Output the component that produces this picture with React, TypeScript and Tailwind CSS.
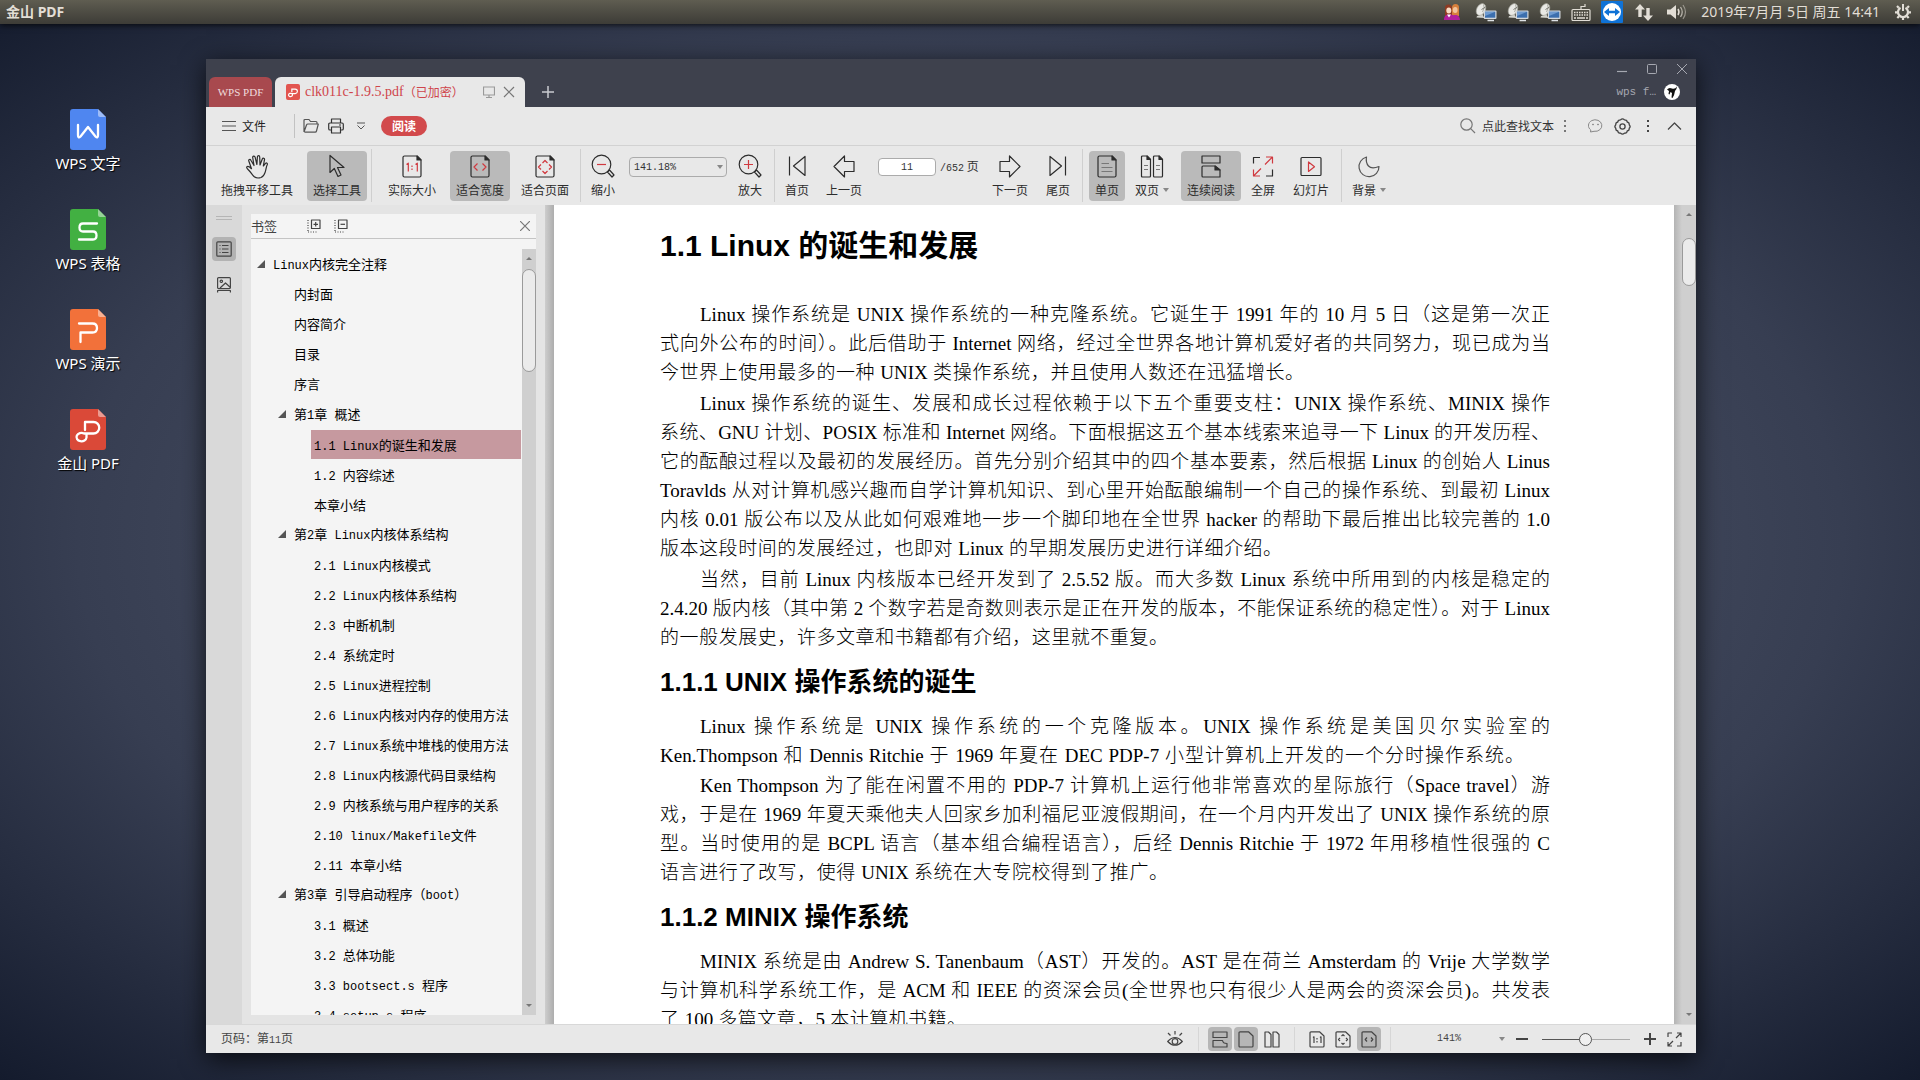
import * as React from "react";
import { clsx } from "clsx";

const uiFont = "font-['Noto_Sans_CJK_SC',sans-serif]";
const monoFont = "font-['Liberation_Mono','Noto_Sans_CJK_SC',monospace]";
const desktopFont = "font-['Noto_Sans','Noto_Sans_CJK_SC',sans-serif]";

interface IconProps {
  className?: string;
  viewBox?: string;
  strokeWidth?: number;
  children: React.ReactNode;
}

function Icon({
  className = "h-6 w-6",
  viewBox = "0 0 24 24",
  strokeWidth = 1.2,
  children,
}: IconProps) {
  return (
    <svg
      className={clsx("shrink-0", className)}
      viewBox={viewBox}
      fill="none"
      stroke="currentColor"
      strokeWidth={strokeWidth}
      strokeLinejoin="round"
      aria-hidden="true"
    >
      {children}
    </svg>
  );
}

const PAGE = "M4.5 1.5H17L21 5.5V21a1.5 1.5 0 0 1-1.5 1.5h-15A1.5 1.5 0 0 1 3 21V3a1.5 1.5 0 0 1 1.5-1.5z";
const FOLD = "M17 1.5L21 5.5H17z";
const RED = "#d0393f";

/* ---------- system bar ---------- */

function SatelliteIcon() {
  return (
    <svg className="h-[19px] w-[22px]" viewBox="0 0 22 19" aria-hidden="true">
      <path d="M1.500 14.500q0-2 3-2l1-2h2l.5 2.500 2 2z" fill="#d5d5cf" />
      <ellipse cx="6" cy="6.500" rx="4.300" ry="6.300" transform="rotate(28 6 6.500)" fill="#e9e9e5" stroke="#a3a39b" strokeWidth=".6" />
      <path d="M8.500 1.500q2 3-1 7.500" stroke="#9a9a92" strokeWidth=".8" fill="none" />
      <path d="M6.500 6.500L10.500 4" stroke="#75756e" strokeWidth="1" />
      <rect x="8.800" y="7.500" width="12.700" height="8.500" rx="1" fill="#d3d8dc" />
      <rect x="10" y="8.700" width="10.300" height="6" fill="#3c6fae" />
      <path d="M10 8.700h10.300L10 13z" fill="#6f9bd0" />
      <path d="M12.500 17.500h6.500" stroke="#dfe3e6" strokeWidth="1.500" />
    </svg>
  );
}

function SystemBar() {
  return (
    <header
      className={clsx(
        "z-10 flex h-6 shrink-0 items-center bg-linear-to-b from-[#5f5d51] to-[#3d3c37] pr-2 pl-[6px] text-sm text-[#e2ded6] shadow-[0_1px_6px_rgba(0,0,0,0.8)]",
        desktopFont,
      )}
    >
      <span className="font-bold">金山 PDF</span>
      <div className="ml-auto flex items-center gap-[10px]">
        <svg className="mr-[5px] h-4 w-4" viewBox="0 0 16 16" aria-hidden="true">
          <path d="M1 13V4q0-3.500 3.500-3.500T8 4v9z" fill="#8e3a22" />
          <path d="M8 12V3.500Q8 0 11.500 0T15 3.500V12z" fill="#d7803c" />
          <ellipse cx="4.800" cy="6.500" rx="2.500" ry="3" fill="#f9dcc4" />
          <ellipse cx="11.200" cy="6" rx="2.400" ry="3" fill="#f3c39c" />
          <path d="M0 16c0-4 2-5.500 5-5.500s4 1 6 .5 5 1 5 5z" fill="#b11f9c" />
          <path d="M3 10.500l2 3 2-3z" fill="#fff" />
        </svg>
        <SatelliteIcon />
        <SatelliteIcon />
        <SatelliteIcon />
        <svg className="h-5 w-5" viewBox="0 0 20 20" fill="none" stroke="#e2ded6" aria-hidden="true">
          <rect x="1" y="7.500" width="18" height="11" rx="1" strokeWidth="1.200" />
          <path d="M10 7V4.500h4V2" strokeWidth="1.200" />
          <path d="M3 10.500h14M3 13h14" strokeWidth="1.500" strokeDasharray="1.500 1" />
          <path d="M3 16h2M6 16h8M15 16h2" strokeWidth="1.500" />
        </svg>
        <svg className="h-[22px] w-[22px]" viewBox="0 0 22 22" aria-hidden="true">
          <rect width="22" height="22" rx="1" fill="#0f72d6" />
          <circle cx="11" cy="11" r="9" fill="#fff" />
          <path d="M3 11l5-4v2.700h6V7l5 4-5 4v-2.700H8V15z" fill="#0f72d6" />
        </svg>
        <svg className="ml-[2px] h-[17px] w-[18px]" viewBox="0 0 18 17" fill="#e2ded6" aria-hidden="true">
          <path d="M5 0l5 5.500H6.700V13H3.300V5.500H0z" />
          <path d="M13 17l5-5.500h-3.300V4h-3.400v7.500H8z" />
        </svg>
        <svg className="ml-1 h-4 w-5" viewBox="0 0 20 16" fill="none" stroke="#e2ded6" aria-hidden="true">
          <path d="M0 5.500h3.500L9 1v14l-5.500-4.500H0z" fill="#e2ded6" stroke="none" />
          <path d="M11 5c1.300 2 1.300 4 0 6" strokeWidth="1.500" />
          <path d="M13.500 3c2.300 3.300 2.300 6.700 0 10" strokeWidth="1.300" opacity=".7" />
          <path d="M16 1c3.300 4.700 3.300 9.300 0 14" strokeWidth="1.200" opacity=".5" />
        </svg>
        <time className="ml-1">2019年7月月 5日 周五 14:41</time>
        <svg className="ml-1 h-[18px] w-[18px]" viewBox="0 0 18 18" fill="none" stroke="#e2ded6" aria-hidden="true">
          <path d="M6.500 4.700a5 5 0 1 0 5 0" strokeWidth="2.200" />
          <path d="M9 1v7" strokeWidth="2" />
          <path d="M4.700 4.700L3 3M13.300 4.700L15 3M3.500 9.300H1M17 9.300h-2.500M5 13.300L3.300 15M13 13.300l1.700 1.700M9 14.500V17" strokeWidth="2.200" />
        </svg>
      </div>
    </header>
  );
}

/* ---------- desktop ---------- */

const PDF_GLYPH = "M15 21V13h8.500a5.500 5.500 0 0 1 0 11.500H14a5 4.200 0 1 0 2.500 4V25";

const shortcuts = [
  { label: "WPS 文字", color: "#4f86f0", glyph: "M8 16v10q0 4 2.500 1.500L18 18l7.500 9.500Q28 30 28 26V16" },
  { label: "WPS 表格", color: "#42b042", glyph: "M27 14.500H13q-3.500 0-3.500 4t3.500 4h10q3.500 0 3.500 4t-3.500 4H9" },
  { label: "WPS 演示", color: "#f2713a", glyph: "M9 14.500h13.500q4.500 0 4.500 4.500t-4.500 4.500H10.500V33" },
  { label: "金山 PDF", color: "#da4938", glyph: PDF_GLYPH },
];

function DesktopIcons() {
  return (
    <nav className={clsx("w-[206px] shrink-0 pt-[85px] pr-[30px]", desktopFont)}>
      <ul className="flex flex-col items-center gap-[34px]">
        {shortcuts.map((s) => (
          <li key={s.label}>
            <button className="flex flex-col items-center gap-px text-[15px] leading-6 text-white [text-shadow:1px_1px_1px_#000]">
              <svg className="h-[41px] w-9" viewBox="0 0 36 41" fill="none" aria-hidden="true">
                <path d="M3 0h25l8 8v30a3 3 0 0 1-3 3H3a3 3 0 0 1-3-3V3a3 3 0 0 1 3-3z" fill={s.color} />
                <path d="M28 0l8 8h-6a2 2 0 0 1-2-2z" fill="#fff" opacity=".45" />
                <path d={s.glyph} stroke="#fff" strokeWidth="2.300" strokeLinecap="round" strokeLinejoin="round" />
              </svg>
              {s.label}
            </button>
          </li>
        ))}
      </ul>
    </nav>
  );
}

/* ---------- window chrome ---------- */

function TitleBar() {
  return (
    <div className="flex h-12 shrink-0 items-end bg-[#3e414d] pl-[3px]">
      <button className="h-[30px] w-[63px] rounded-t-md bg-[#a8494e] font-['Liberation_Serif',serif] text-[11px] text-[#f0dcdc]">
        WPS PDF
      </button>
      <div className="ml-[3px] flex h-[30px] w-[250px] items-center rounded-t-md bg-[#e8e8e8] pr-[10px] pl-[11px] whitespace-nowrap text-[#cf454b]">
        <svg className="mr-[5px] h-4 w-[14px] shrink-0" viewBox="0 0 36 41" fill="none" aria-hidden="true">
          <rect width="36" height="41" rx="5" fill="#e2544f" />
          <path d={PDF_GLYPH} stroke="#fff" strokeWidth="3" />
        </svg>
        <span className="font-['Liberation_Serif',serif] text-sm">clk011c-1.9.5.pdf</span>
        <span className="text-xs">（已加密）</span>
        <Icon className="ml-auto h-3 w-3 text-[#999]" viewBox="0 0 12 12">
          <path d="M.5 1h11v8H.5zM6 9v2.500M3 11.500h6" />
        </Icon>
        <button aria-label="关闭标签" className="ml-2">
          <Icon className="h-3 w-3 text-[#777]" viewBox="0 0 12 12">
            <path d="M1 1l10 10M11 1L1 11" />
          </Icon>
        </button>
      </div>
      <button aria-label="新建标签" className="mb-[9px] ml-[17px] text-[#c9cad0]">
        <Icon className="h-3 w-3" viewBox="0 0 12 12" strokeWidth={1.5}>
          <path d="M6 0v12M0 6h12" />
        </Icon>
      </button>
      <div className="ml-auto flex flex-col items-end gap-[10px] pb-[7px] text-[#a6a8b1]">
        <div className="flex gap-5 pr-[9px]">
          <button aria-label="最小化">
            <Icon className="h-[10px] w-[10px]" viewBox="0 0 10 10">
              <path d="M0 7.500h10" />
            </Icon>
          </button>
          <button aria-label="最大化">
            <Icon className="h-[10px] w-[10px]" viewBox="0 0 10 10" strokeWidth={1}>
              <rect x=".5" y=".5" width="9" height="9" rx="1" />
            </Icon>
          </button>
          <button aria-label="关闭">
            <Icon className="h-[10px] w-[10px]" viewBox="0 0 10 10" strokeWidth={1}>
              <path d="M0 0l10 10M10 0L0 10" />
            </Icon>
          </button>
        </div>
        <div className="flex items-center gap-2 pr-4">
          <span className={clsx("text-[11px] leading-4", monoFont)}>wps f…</span>
          <svg className="h-4 w-4" viewBox="0 0 16 16" aria-hidden="true">
            <circle cx="8" cy="8" r="8" fill="#fff" />
            <path d="M3 5.500Q5 3 8 4.500q3 1 5-2-.2 3-2 4.500-.5 4-2.500 7l-1-.5.5-4.500-1.500-1-1 2.500-1-.5L5 7z" fill="#111" />
          </svg>
        </div>
      </div>
    </div>
  );
}

function MenuBar() {
  return (
    <div className="flex h-[38px] shrink-0 items-center pr-[14px] pl-4 text-xs text-[#222]">
      <button className="flex items-center gap-[6px]">
        <Icon className="h-3 w-[14px] text-[#555]" viewBox="0 0 14 12">
          <path d="M0 1.500h14M0 6h14M0 10.500h14" />
        </Icon>
        文件
      </button>
      <span className="ml-7 h-6 w-px bg-[#c2c2c2]" />
      <button aria-label="打开" className="ml-2 text-[#555]">
        <Icon className="h-4 w-4" viewBox="0 0 16 16">
          <path d="M1 14V2.500Q1 1.500 2 1.500h4l1.500 2H13q1 0 1 1V6M1 14l2.500-7q.4-1 1.300-1H15.300L13.500 13q-.3 1.200-1.300 1.200H1.500" />
        </Icon>
      </button>
      <button aria-label="打印" className="ml-[9px] text-[#333]">
        <Icon className="h-4 w-4" viewBox="0 0 16 16">
          <path d="M3.500 5V1h9v4M3.500 12H2q-1.300 0-1.300-1.300V6.300Q.7 5 2 5h12q1.300 0 1.300 1.300v4.400Q15.300 12 14 12h-1.500M3.500 9h9v6h-9zM11 7h2" />
        </Icon>
      </button>
      <button aria-label="更多" className="ml-[13px] text-[#555]">
        <Icon className="h-2 w-2" viewBox="0 0 8 8" strokeWidth={1}>
          <path d="M0 1h8M.5 3.500L4 7l3.500-3.500" />
        </Icon>
      </button>
      <button className="ml-4 h-5 w-[46px] rounded-full bg-[#d24a4c] font-bold text-white">阅读</button>

      <label className="ml-auto flex items-center gap-[6px]">
        <Icon className="h-4 w-4 text-[#777]" viewBox="0 0 16 16">
          <circle cx="6.500" cy="6.500" r="5.700" />
          <path d="M10.700 10.700L15 15" />
        </Icon>
        <input
          type="text"
          placeholder="点此查找文本"
          className="w-[74px] bg-transparent text-xs outline-none placeholder:text-[#333]"
        />
      </label>
      <Icon className="ml-1 h-4 w-[10px] text-[#777]" viewBox="0 0 10 16" strokeWidth={2}>
        <path d="M5 2v2M5 7v2M5 12v2" />
      </Icon>
      <button aria-label="反馈" className="ml-[18px] text-[#888]">
        <Icon className="h-4 w-[15px]" viewBox="0 0 15 16" strokeWidth={1}>
          <path d="M2.800 12A6.700 5.800 0 1 1 6 13.300L2.500 14z" />
          <circle cx="5" cy="6.500" r=".5" fill="currentColor" />
          <circle cx="10" cy="6.500" r=".5" fill="currentColor" />
        </Icon>
      </button>
      <button aria-label="设置" className="ml-[11px] text-[#444]">
        <Icon className="h-[17px] w-[17px]" viewBox="0 0 17 17" strokeWidth={1.3}>
          <path d="M6.600 1.800Q8.500 0 10.400 1.800 13 1.600 13.200 4 15.600 4.600 15.200 6.700 17 8.500 15.200 10.300 15.600 12.400 13.200 13 13 15.400 10.400 15.200 8.500 17 6.600 15.200 4 15.400 3.800 13 1.400 12.400 1.800 10.300 0 8.500 1.800 6.700 1.400 4.600 3.800 4 4 1.600 6.600 1.800z" />
          <circle cx="8.500" cy="8.500" r="2.600" />
        </Icon>
      </button>
      <Icon className="ml-3 h-4 w-[10px] text-[#444]" viewBox="0 0 10 16" strokeWidth={2}>
        <path d="M5 2v2M5 7v2M5 12v2" />
      </Icon>
      <button aria-label="收起" className="ml-[14px] text-[#444]">
        <Icon className="h-[14px] w-[15px]" viewBox="0 0 15 14">
          <path d="M1 10.500L7.500 4l6.500 6.500" />
        </Icon>
      </button>
    </div>
  );
}

/* ---------- toolbar ---------- */

interface ToolButtonProps {
  label: string;
  className: string;
  active?: boolean;
  menu?: boolean;
  children: React.ReactNode;
}

function ToolButton({ label, className, active, menu, children }: ToolButtonProps) {
  return (
    <button
      aria-pressed={active}
      className={clsx(
        "flex h-[50px] shrink-0 flex-col items-center rounded pt-[3px] text-[#2c2c2c]",
        active && "bg-[#bababa]",
        className,
      )}
    >
      {children}
      <span className="mt-px flex items-center gap-1 text-xs leading-5 whitespace-nowrap">
        {label}
        {menu && <Caret />}
      </span>
    </button>
  );
}

function Caret() {
  return (
    <svg className="h-1 w-[6px] shrink-0" viewBox="0 0 6 4" fill="#888" aria-hidden="true">
      <path d="M0 0h6L3 4z" />
    </svg>
  );
}

function Divider({ className }: { className: string }) {
  return <span className={clsx("h-[53px] w-px shrink-0 bg-[#cfcfcf]", className)} />;
}

function ZoomIcon({ plus }: { plus?: boolean }) {
  return (
    <Icon className="h-[25px] w-6" viewBox="0 0 24 25">
      <circle cx="10.500" cy="10.500" r="9.300" />
      <path d="M16.500 18l2-2 4.500 5-2 2z" />
      <path d={plus ? "M6 10.500h9M10.500 6v9" : "M6 10.500h9"} stroke={RED} />
    </Icon>
  );
}

function Toolbar() {
  return (
    <div className="flex h-[60px] shrink-0 items-center border-t border-[#d2d2d2] pl-[9px]">
      <ToolButton label="拖拽平移工具" className="w-[84px]">
        <Icon className="h-[25px] w-6" viewBox="0 0 24 25">
          <path d="M9 22.500c-2-2-3-4-5.500-6.500-1.500-1.500-2.300-2.600-1.500-3.300 1.200-1 2.700.3 4.500 2L3.800 7C3.300 5.500 5.200 4.800 5.900 6.200L9 11.500 7.700 3.500c-.2-1.700 2-2 2.400-.4l1.800 7.400.5-7.700c.2-1.500 2.300-1.500 2.300.1l.3 8.100 2.300-6c.6-1.500 2.500-.8 2.200.7L18.300 12l2.200-2.600c1-1 2.300 0 1.700 1.300-1 2-1.200 4.800-2 7.500-.7 2.300-2 4.500-4.200 5.300-2.600.8-5.200.6-7-1z" />
        </Icon>
      </ToolButton>
      <ToolButton label="选择工具" active className="ml-2 w-[60px]">
        <Icon className="h-[25px] w-6" viewBox="0 0 24 25">
          <path d="M5 1.500v17l4.300-4 3.700 8 3-1.500-3.500-7.500H19z" />
        </Icon>
      </ToolButton>
      <Divider className="ml-1" />
      <ToolButton label="实际大小" className="ml-[10px] w-[60px]">
        <Icon className="h-[25px] w-6">
          <path d={PAGE} />
          <path d={FOLD} fill="currentColor" />
          <path d="M6.500 10L8.300 8.700V17M15.500 10l1.800-1.300V17M12 11v1.500M12 14v1.500" stroke={RED} />
        </Icon>
      </ToolButton>
      <ToolButton label="适合宽度" active className="ml-2 w-[60px]">
        <Icon className="h-[25px] w-6">
          <path d={PAGE} />
          <path d={FOLD} fill="currentColor" />
          <path d="M9.500 9L6 12.500 9.500 16M14.500 9l3.500 3.500-3.500 3.500" stroke={RED} />
        </Icon>
      </ToolButton>
      <ToolButton label="适合页面" className="ml-2 w-[54px]">
        <Icon className="h-[25px] w-6">
          <path d={PAGE} />
          <path d={FOLD} fill="currentColor" />
          <path d="M9.500 8.500L12 6l2.500 2.500M9.500 16.500L12 19l2.500-2.500M8 10l-2.500 2.500L8 15M16 10l2.500 2.500L16 15" stroke={RED} />
        </Icon>
      </ToolButton>
      <Divider className="ml-2" />
      <ToolButton label="缩小" className="ml-1 w-9">
        <ZoomIcon />
      </ToolButton>
      <div className="relative mb-[17px] ml-2 w-[98px] shrink-0">
        <select
          aria-label="缩放比例"
          className={clsx(
            "block h-5 w-full appearance-none rounded-sm border border-[#ababab] bg-[#e8e8e8] pl-1 text-[10px] text-[#333]",
            monoFont,
          )}
        >
          <option>141.18%</option>
        </select>
        <span className="pointer-events-none absolute top-2 right-1 flex">
          <Caret />
        </span>
      </div>
      <ToolButton label="放大" className="ml-[5px] w-9">
        <ZoomIcon plus />
      </ToolButton>
      <Divider className="ml-[6px]" />
      <ToolButton label="首页" className="ml-1 w-9">
        <Icon className="h-[25px] w-6">
          <path d="M4.500 2v19M20 2v19L8.500 11.500z" />
        </Icon>
      </ToolButton>
      <ToolButton label="上一页" className="ml-[7px] w-11">
        <Icon className="h-[25px] w-6">
          <path d="M2 12L12.500 1.500V7H22v10h-9.500v5.500z" />
        </Icon>
      </ToolButton>
      <input
        aria-label="页码"
        defaultValue="11"
        className={clsx(
          "mb-[17px] ml-3 h-[18px] w-[58px] shrink-0 rounded border border-[#ababab] bg-white text-center text-[10px] text-[#333]",
          monoFont,
        )}
      />
      <span className="mb-[17px] ml-1 w-10 shrink-0 text-xs whitespace-nowrap text-[#333]">
        <span className={clsx("text-[10px]", monoFont)}>/652</span> 页
      </span>
      <ToolButton label="下一页" className="ml-2 w-11">
        <Icon className="h-[25px] w-6">
          <path d="M22 12L11.500 1.500V7H2v10h9.500v5.500z" />
        </Icon>
      </ToolButton>
      <ToolButton label="尾页" className="ml-2 w-9">
        <Icon className="h-[25px] w-6">
          <path d="M19.500 2v19M4 2v19l11.500-9.500z" />
        </Icon>
      </ToolButton>
      <Divider className="ml-[6px]" />
      <ToolButton label="单页" active className="ml-[6px] w-9">
        <Icon className="h-[25px] w-6">
          <path d={PAGE} />
          <path d={FOLD} fill="currentColor" />
          <path d="M6.500 9H14M6.500 13h11M6.500 17h11" stroke="#777" />
        </Icon>
      </ToolButton>
      <ToolButton label="双页" menu className="ml-[5px] w-11">
        <Icon className="h-[25px] w-6">
          <path d="M2.500 1.500H7L10.500 5v16.500q0 1-1 1h-7q-1 0-1-1v-19q0-1 1-1zM14.500 1.500H19L22.500 5v16.500q0 1-1 1h-7q-1 0-1-1v-19q0-1 1-1z" />
          <path d="M7 1.500L10.500 5H7zM19 1.500L22.500 5H19z" fill="currentColor" />
          <path d="M4 11h4M4 15h4M16 11h4M16 15h4" stroke="#777" />
        </Icon>
      </ToolButton>
      <ToolButton label="连续阅读" active className="ml-[7px] w-[60px]">
        <Icon className="h-[25px] w-6">
          <path d="M3 1.500h18v7H3zM4 11.500h12l5 4V22.500H4q-1 0-1-1v-9q0-1 1-1z" />
          <path d="M16 11.500l5 4h-5z" fill="currentColor" />
        </Icon>
      </ToolButton>
      <ToolButton label="全屏" className="ml-1 w-9">
        <Icon className="h-[25px] w-6">
          <path d="M2.500 9V3H9M15 21.500h6.500V15" />
          <path d="M14 10l7-7M15 2.500h6.500V9M10 14l-7 7M2.500 15v6.500H9" stroke={RED} />
        </Icon>
      </ToolButton>
      <ToolButton label="幻灯片" className="ml-2 w-11">
        <Icon className="h-[25px] w-6">
          <rect x="2" y="3" width="20" height="18" rx="1" />
          <path d="M9.500 7.500v9.500l6-4.700z" stroke={RED} />
        </Icon>
      </ToolButton>
      <Divider className="ml-2" />
      <ToolButton label="背景" menu className="ml-[5px] w-11">
        <Icon className="h-[25px] w-6">
          <path d="M9.500 2.500Q8.500 8 11.500 11.500t10.500.5A10 10 0 1 1 9.500 2.500z" stroke="#555" />
        </Icon>
      </ToolButton>
    </div>
  );
}

/* ---------- bookmarks ---------- */

interface Bookmark {
  level: 0 | 1 | 2;
  text: string;
  open?: boolean;
  selected?: boolean;
}

const bookmarks: Bookmark[] = [
  { level: 0, text: "Linux内核完全注释", open: true },
  { level: 1, text: "内封面" },
  { level: 1, text: "内容简介" },
  { level: 1, text: "目录" },
  { level: 1, text: "序言" },
  { level: 1, text: "第1章 概述", open: true },
  { level: 2, text: "1.1 Linux的诞生和发展", selected: true },
  { level: 2, text: "1.2 内容综述" },
  { level: 2, text: "本章小结" },
  { level: 1, text: "第2章 Linux内核体系结构", open: true },
  { level: 2, text: "2.1 Linux内核模式" },
  { level: 2, text: "2.2 Linux内核体系结构" },
  { level: 2, text: "2.3 中断机制" },
  { level: 2, text: "2.4 系统定时" },
  { level: 2, text: "2.5 Linux进程控制" },
  { level: 2, text: "2.6 Linux内核对内存的使用方法" },
  { level: 2, text: "2.7 Linux系统中堆栈的使用方法" },
  { level: 2, text: "2.8 Linux内核源代码目录结构" },
  { level: 2, text: "2.9 内核系统与用户程序的关系" },
  { level: 2, text: "2.10 linux/Makefile文件" },
  { level: 2, text: "2.11 本章小结" },
  { level: 1, text: "第3章 引导启动程序（boot）", open: true },
  { level: 2, text: "3.1 概述" },
  { level: 2, text: "3.2 总体功能" },
  { level: 2, text: "3.3 bootsect.s 程序" },
  { level: 2, text: "3.4 setup.s 程序" },
];

const levelIndent = { 0: "pl-[6px]", 1: "pl-[27px]", 2: "pl-[60px]" };

// latin runs are set in a slightly smaller monospace face
function MixedText({ text }: { text: string }) {
  return (
    <>
      {text.split(/([\x20-\x7e]+)/).map((part, i) =>
        i % 2 === 1 ? (
          <span key={i} className={clsx("text-xs whitespace-pre", monoFont)}>
            {part}
          </span>
        ) : (
          part
        ),
      )}
    </>
  );
}

function Scrollbar({ thumb }: { thumb: string }) {
  return (
    <div className="flex w-[14px] shrink-0 flex-col items-center bg-[#cfcfcf] text-[#777]">
      <svg className="mt-2 h-[3px] w-[6px]" viewBox="0 0 6 3" fill="currentColor" aria-hidden="true">
        <path d="M0 3h6L3 0z" />
      </svg>
      <div className={clsx("w-full rounded-full border border-[#9a9a9a] bg-[#ebebeb]", thumb)} />
      <svg className="mt-auto mb-2 h-[3px] w-[6px]" viewBox="0 0 6 3" fill="currentColor" aria-hidden="true">
        <path d="M0 0h6L3 3z" />
      </svg>
    </div>
  );
}

function SideStrip() {
  return (
    <div className="flex w-9 shrink-0 flex-col items-center bg-[#d9d9d9] pt-[11px] text-[#444]">
      <span className="h-1 w-4 border-y border-[#b5b5b5]" />
      <button
        aria-label="书签"
        className="mt-[17px] flex h-6 w-6 items-center justify-center rounded bg-[#b3b3b3]"
      >
        <Icon className="h-4 w-4" viewBox="0 0 16 16">
          <rect x=".8" y=".8" width="14.400" height="14.400" rx="1" />
          <path d="M3.500 4.500h1M6 4.500h6.500M3.500 8h1M6 8h6.500M3.500 11.500h1M6 11.500h6.500" />
        </Icon>
      </button>
      <button aria-label="缩略图" className="mt-4">
        <Icon className="h-4 w-[14px]" viewBox="0 0 14 16">
          <rect x=".6" y=".6" width="12.800" height="11" rx="1" />
          <circle cx="4.300" cy="4.300" r="1.200" />
          <path d="M3 11l5.500-5 5 4.500M.6 15.500v-2h12.800v2" />
        </Icon>
      </button>
    </div>
  );
}

function BookmarkPanel() {
  return (
    <aside className="flex w-[303px] shrink-0 bg-[#e4e4e4] p-[9px]">
      <div className="flex min-h-0 w-full flex-col bg-[#f4f4f4]">
        <div className="flex h-[25px] shrink-0 items-center border-b border-[#c4c4c4] pr-[6px] text-[13px] text-[#444]">
          <h2>书签</h2>
          <button aria-label="全部展开" className="ml-[30px]">
            <Icon className="h-[14px] w-[14px]" viewBox="0 0 14 14">
              <rect x="4.500" y="1" width="8.500" height="8.500" />
              <path d="M6.500 5.300h4.500M8.700 3v4.500" />
              <path d="M1 1v12M1 13h10" strokeDasharray="1 1.500" />
            </Icon>
          </button>
          <button aria-label="全部收起" className="ml-[13px]">
            <Icon className="h-[14px] w-[14px]" viewBox="0 0 14 14">
              <rect x="4.500" y="1" width="8.500" height="8.500" />
              <path d="M6.500 5.300h4.500" />
              <path d="M1 1v12M1 13h10" strokeDasharray="1 1.500" />
            </Icon>
          </button>
          <button aria-label="关闭书签" className="ml-auto">
            <Icon className="h-[10px] w-[10px] text-[#777]" viewBox="0 0 10 10">
              <path d="M0 0l10 10M10 0L0 10" />
            </Icon>
          </button>
        </div>
        <div className="mt-[10px] flex min-h-0 flex-1">
          <ul className="min-w-0 flex-1 overflow-hidden text-[13px] text-black">
            {bookmarks.map((b) => (
              <li key={b.text} className={clsx("flex h-[30px] items-center pr-px", levelIndent[b.level])}>
                {b.level < 2 && (
                  <svg className="mr-2 h-2 w-2 shrink-0" viewBox="0 0 8 8" fill="#555" aria-hidden="true">
                    {b.open && <path d="M8 0v8H0z" />}
                  </svg>
                )}
                <a
                  href="#"
                  className={clsx(
                    "whitespace-nowrap",
                    b.level === 2 && "h-[29px] flex-1 pl-[3px] leading-[29px]",
                    b.selected && "bg-[#c6999f]",
                  )}
                >
                  <MixedText text={b.text} />
                </a>
              </li>
            ))}
          </ul>
          <Scrollbar thumb="mt-[9px] h-[103px]" />
        </div>
      </div>
    </aside>
  );
}

/* ---------- document ---------- */

interface ParagraphProps {
  lines: string[];
  // width taken by the closing line when it does not fill the column
  last: string;
}

function Paragraph({ lines, last }: ParagraphProps) {
  return (
    <p className="text-[19px] leading-[29px]">
      {lines.map((line, i) => (
        <span
          key={line}
          className={clsx(
            "block whitespace-nowrap [text-align-last:justify]",
            i === 0 && "pl-10",
            i === lines.length - 1 && last,
          )}
        >
          {line}
        </span>
      ))}
    </p>
  );
}

const subheading =
  "my-[14px] font-['Liberation_Sans','Noto_Sans_CJK_SC',sans-serif] text-[26px] leading-8 font-bold text-black";

function DocumentView() {
  return (
    <main className="flex min-w-0 flex-1">
      <div className="w-[9px] shrink-0 bg-linear-to-r from-[#cdcdcd] to-[#adadad]" />
      <article className="min-w-0 flex-1 overflow-hidden bg-white pt-[21px] pr-[124px] pl-[106px] font-['Liberation_Serif','Noto_Sans_CJK_SC',serif] font-light text-black">
        <h1 className="mb-[34px] font-['Liberation_Sans','Noto_Sans_CJK_SC',sans-serif] text-[30px] leading-10 font-bold text-black">
          1.1 Linux 的诞生和发展
        </h1>
        <div className="flex flex-col gap-[2px]">
          <Paragraph
            last="w-[644px]"
            lines={[
              "Linux 操作系统是 UNIX 操作系统的一种克隆系统。它诞生于 1991 年的 10 月 5 日（这是第一次正",
              "式向外公布的时间）。此后借助于 Internet 网络，经过全世界各地计算机爱好者的共同努力，现已成为当",
              "今世界上使用最多的一种 UNIX 类操作系统，并且使用人数还在迅猛增长。",
            ]}
          />
          <Paragraph
            last="w-[622px]"
            lines={[
              "Linux 操作系统的诞生、发展和成长过程依赖于以下五个重要支柱：UNIX 操作系统、MINIX 操作",
              "系统、GNU 计划、POSIX 标准和 Internet 网络。下面根据这五个基本线索来追寻一下 Linux 的开发历程、",
              "它的酝酿过程以及最初的发展经历。首先分别介绍其中的四个基本要素，然后根据 Linux 的创始人 Linus",
              "Toravlds 从对计算机感兴趣而自学计算机知识、到心里开始酝酿编制一个自己的操作系统、到最初 Linux",
              "内核 0.01 版公布以及从此如何艰难地一步一个脚印地在全世界 hacker 的帮助下最后推出比较完善的 1.0",
              "版本这段时间的发展经过，也即对 Linux 的早期发展历史进行详细介绍。",
            ]}
          />
          <Paragraph
            last="w-[508px]"
            lines={[
              "当然，目前 Linux 内核版本已经开发到了 2.5.52 版。而大多数 Linux 系统中所用到的内核是稳定的",
              "2.4.20 版内核（其中第 2 个数字若是奇数则表示是正在开发的版本，不能保证系统的稳定性）。对于 Linux",
              "的一般发展史，许多文章和书籍都有介绍，这里就不重复。",
            ]}
          />
        </div>
        <h2 className={subheading}>1.1.1 UNIX 操作系统的诞生</h2>
        <div className="flex flex-col gap-px">
          <Paragraph
            last="w-[864px]"
            lines={[
              "Linux 操作系统是 UNIX 操作系统的一个克隆版本。UNIX 操作系统是美国贝尔实验室的",
              "Ken.Thompson 和 Dennis Ritchie 于 1969 年夏在 DEC PDP-7 小型计算机上开发的一个分时操作系统。",
            ]}
          />
          <Paragraph
            last="w-[508px]"
            lines={[
              "Ken Thompson 为了能在闲置不用的 PDP-7 计算机上运行他非常喜欢的星际旅行（Space travel）游",
              "戏，于是在 1969 年夏天乘他夫人回家乡加利福尼亚渡假期间，在一个月内开发出了 UNIX 操作系统的原",
              "型。当时使用的是 BCPL 语言（基本组合编程语言），后经 Dennis Ritchie 于 1972 年用移植性很强的 C",
              "语言进行了改写，使得 UNIX 系统在大专院校得到了推广。",
            ]}
          />
        </div>
        <h2 className={subheading}>1.1.2 MINIX 操作系统</h2>
        <Paragraph
          last="w-[306px]"
          lines={[
            "MINIX 系统是由 Andrew S. Tanenbaum（AST）开发的。AST 是在荷兰 Amsterdam 的 Vrije 大学数学",
            "与计算机科学系统工作，是 ACM 和 IEEE 的资深会员(全世界也只有很少人是两会的资深会员)。共发表",
            "了 100 多篇文章，5 本计算机书籍。",
          ]}
        />
      </article>
      <div className="w-2 shrink-0 bg-linear-to-r from-[#b4b4b4] to-[#cfcfcf]" />
      <Scrollbar thumb="mt-[22px] h-12" />
    </main>
  );
}

/* ---------- status bar ---------- */

function StatusButton({
  label,
  active,
  children,
}: {
  label: string;
  active?: boolean;
  children: React.ReactNode;
}) {
  return (
    <button
      aria-label={label}
      aria-pressed={active}
      className={clsx("flex h-6 w-6 items-center justify-center rounded", active && "bg-[#b6b6b6]")}
    >
      <Icon className="h-[17px] w-4" viewBox="0 0 16 17">
        {children}
      </Icon>
    </button>
  );
}

const SMALL_PAGE = "M2 .8h8.500L15 5v10q0 1-1 1H2q-1 0-1-1V1.800q0-1 1-1z";

function StatusBar() {
  return (
    <footer className="flex h-[29px] shrink-0 items-center border-t border-[#d8d8d8] pr-[14px] pl-[15px] text-xs text-[#444]">
      <span>
        页码：第<span className={clsx("text-[10px]", monoFont)}>11</span>页
      </span>
      <button aria-label="护眼模式" className="ml-auto">
        <Icon className="h-4 w-4" viewBox="0 0 16 16">
          <path d="M.7 10.500Q8 2.500 15.300 10.500 8 18 .7 10.500zM8 0v3.500M1 2l2.500 2.500M15 2l-2.500 2.500" />
          <circle cx="8" cy="10.500" r="2.800" />
        </Icon>
      </button>
      <span className="mr-[9px] ml-[15px] h-6 w-px bg-[#d6d6d6]" />
      <div className="flex gap-[2px]">
        <StatusButton label="连续阅读" active>
          <path d="M1 1h14v5.500H1zM1 9.500h9.500q.5 3 4.500 3V16H1z" />
        </StatusButton>
        <StatusButton label="单页" active>
          <path d={SMALL_PAGE} />
        </StatusButton>
        <StatusButton label="双页">
          <path d="M1 1h3.500L7 3.500V16H1zM9 1h3.500L15 3.500V16H9z" />
        </StatusButton>
      </div>
      <span className="mr-[10px] ml-[10px] h-6 w-px bg-[#d6d6d6]" />
      <div className="flex gap-[2px]">
        <StatusButton label="实际大小">
          <path d={SMALL_PAGE} />
          <path d="M4 6.500l1-.7V12M11 6.500l1-.7V12M8 7v1.500M8 10v1.500" />
        </StatusButton>
        <StatusButton label="适合页面">
          <path d={SMALL_PAGE} />
          <path d="M6.500 5L8 3.700 9.500 5M6.500 12L8 13.300 9.500 12M5 7L3.500 8.500 5 10M11 7l1.500 1.500L11 10" />
        </StatusButton>
        <StatusButton label="适合宽度" active>
          <path d={SMALL_PAGE} />
          <path d="M6 6.500L4.200 8.500 6 10.500M10 6.500l1.800 2L10 10.500" />
        </StatusButton>
      </div>
      <span className="ml-[9px] h-6 w-px bg-[#d6d6d6]" />
      <button className="ml-[46px] flex w-[68px] items-center justify-between">
        <span className={clsx("text-[10px]", monoFont)}>141%</span>
        <Caret />
      </button>
      <button aria-label="缩小" className="ml-[11px]">
        <Icon className="h-3 w-3" viewBox="0 0 12 12" strokeWidth={2}>
          <path d="M0 6h12" />
        </Icon>
      </button>
      <input
        type="range"
        aria-label="缩放"
        defaultValue={49}
        className="mx-[14px] h-4 w-[88px] appearance-none bg-transparent [&::-webkit-slider-runnable-track]:h-px [&::-webkit-slider-runnable-track]:bg-linear-to-r [&::-webkit-slider-runnable-track]:from-[#555] [&::-webkit-slider-runnable-track]:from-50% [&::-webkit-slider-runnable-track]:to-[#aaa] [&::-webkit-slider-runnable-track]:to-50% [&::-webkit-slider-thumb]:-mt-[6px] [&::-webkit-slider-thumb]:h-[13px] [&::-webkit-slider-thumb]:w-[13px] [&::-webkit-slider-thumb]:appearance-none [&::-webkit-slider-thumb]:rounded-full [&::-webkit-slider-thumb]:border [&::-webkit-slider-thumb]:border-[#555] [&::-webkit-slider-thumb]:bg-[#f0f0f0]"
      />
      <button aria-label="放大">
        <Icon className="h-3 w-3" viewBox="0 0 12 12" strokeWidth={2}>
          <path d="M0 6h12M6 0v12" />
        </Icon>
      </button>
      <button aria-label="全屏" className="ml-[11px]">
        <Icon className="h-[15px] w-[15px]" viewBox="0 0 15 15">
          <path d="M1 5V1h4M14 10v4h-4M9 6l5-5M10 1h4v4M6 9l-5 5M5 14H1v-4" />
        </Icon>
      </button>
    </footer>
  );
}

export default function App() {
  return (
    <div
      className={clsx(
        "flex h-screen flex-col overflow-hidden bg-[radial-gradient(ellipse_at_center,#4d5569_0%,#454c60_40%,#373e52_65%,#141b2d_100%)]",
        uiFont,
      )}
    >
      <SystemBar />
      <div className="flex min-h-0 flex-1">
        <DesktopIcons />
        <section className="mt-[35px] mr-[224px] mb-[27px] flex min-w-0 flex-1 flex-col bg-[#e8e8e8] shadow-[0_6px_24px_rgba(0,0,0,0.75)]">
          <TitleBar />
          <MenuBar />
          <Toolbar />
          <div className="flex min-h-0 flex-1">
            <SideStrip />
            <BookmarkPanel />
            <DocumentView />
          </div>
          <StatusBar />
        </section>
      </div>
    </div>
  );
}
